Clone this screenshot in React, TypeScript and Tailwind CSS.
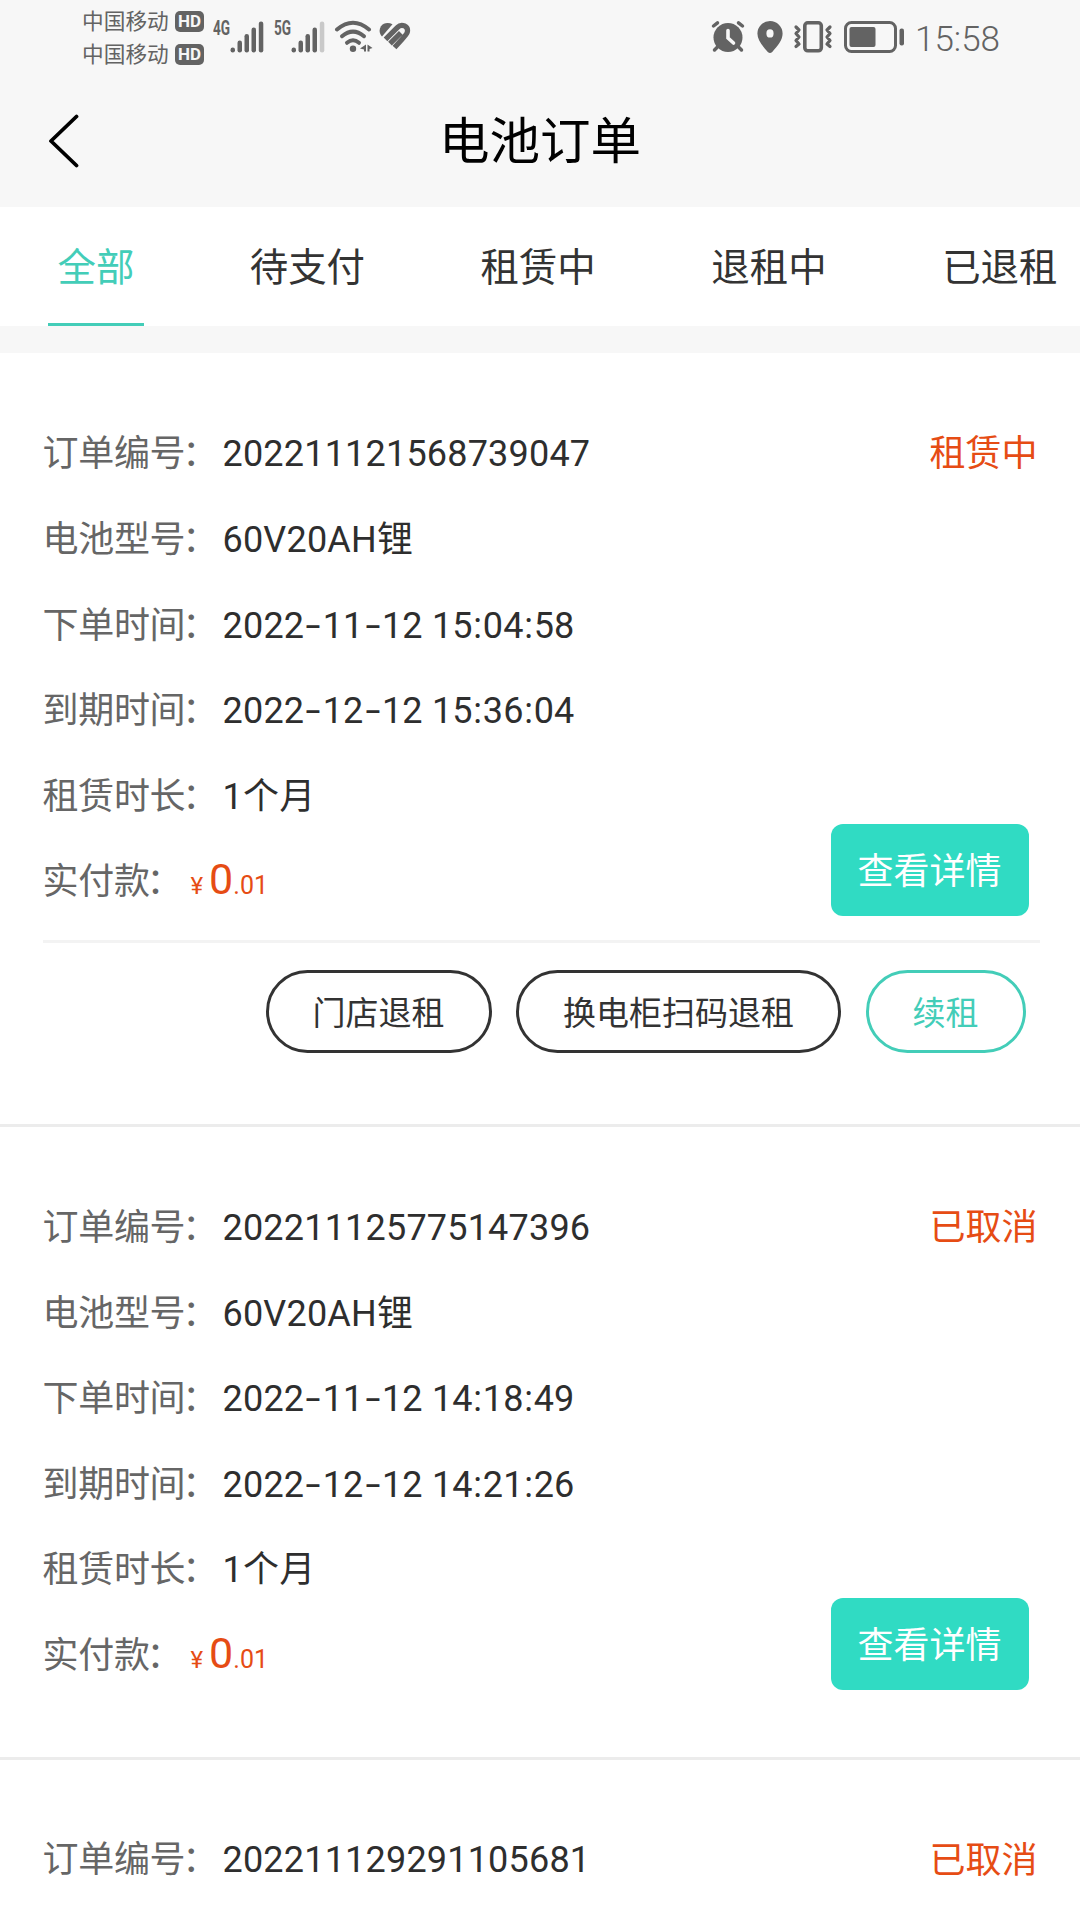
import { useState } from "react";

type Order = {
  id: string;
  status: string;
  active?: boolean;
  detail?: {
    model: string;
    createdAt: string;
    expiresAt: string;
    duration: string;
    price: string;
  };
};

const TABS = ["全部", "待支付", "租赁中", "退租中", "已退租"];

const ORDERS: Order[] = [
  {
    id: "202211121568739047",
    status: "租赁中",
    active: true,
    detail: {
      model: "60V20AH锂",
      createdAt: "2022-11-12 15:04:58",
      expiresAt: "2022-12-12 15:36:04",
      duration: "1个月",
      price: "0.01",
    },
  },
  {
    id: "202211125775147396",
    status: "已取消",
    detail: {
      model: "60V20AH锂",
      createdAt: "2022-11-12 14:18:49",
      expiresAt: "2022-12-12 14:21:26",
      duration: "1个月",
      price: "0.01",
    },
  },
  {
    id: "202211129291105681",
    status: "已取消",
  },
];

function Carrier() {
  return (
    <div className="flex h-[33px] items-center gap-[6px] whitespace-nowrap">
      <span className="w-[87px] text-[21.7px] leading-none">中国移动</span>
      <span className="flex h-[21px] w-[29px] shrink-0 items-center justify-center rounded-[5px] bg-[#636363] text-[17px] leading-none font-bold text-[#f7f7f7]">
        HD
      </span>
    </div>
  );
}

function Signal({ label, weak }: { label: string; weak?: boolean }) {
  return (
    <div className="flex">
      <span className="w-[17px] origin-left scale-x-[0.68] text-[20px] leading-[14px] font-bold">
        {label}
      </span>
      <svg width="34" height="33" viewBox="0 0 34 33" fill="currentColor">
        <rect x="0.5" y="26.5" width="4.5" height="5" rx="2.2" />
        <rect x="7.5" y="19.5" width="4.5" height="12" rx="2.2" />
        <rect x="14.5" y="13" width="4.5" height="18.5" rx="2.2" />
        <rect x="21.5" y="6.5" width="4.5" height="25" rx="2.2" />
        <rect x="28.8" y="0.5" width="4.5" height="31" rx="2.2" fill={weak ? "#c9c9c9" : "currentColor"} />
      </svg>
    </div>
  );
}

function StatusBar() {
  return (
    <div className="flex h-[74px] shrink-0 items-start justify-between pr-[80px] pl-[82px] text-[#636363]">
      <div className="flex">
        <div className="w-[122px] pt-[5px]">
          <Carrier />
          <Carrier />
        </div>
        <div className="flex pt-[21px] pl-[9px]">
          <Signal label="4G" />
          <div className="w-[10px]" />
          <Signal label="5G" weak />
        </div>
        {/* wifi */}
        <svg className="mt-[20px] ml-[9px]" width="40" height="34" viewBox="0 0 40 34" fill="none" stroke="currentColor" strokeWidth="4" strokeLinecap="round">
          <path d="M3 9.5Q19 -4 35 9.5" />
          <path d="M8 16.2Q19 7 30 16.2" />
          <path d="M13 22.8Q19 17.8 25 22.8" />
          <circle cx="19" cy="28.8" r="3.2" fill="currentColor" stroke="none" />
          <path d="M32 24.5V31.5H30V29.5L26 28.5ZM33.5 24.5L38.5 28L35.5 29V31.5H33.5Z" fill="currentColor" stroke="none" />
        </svg>
        {/* health */}
        <svg className="mt-[22px] ml-[5px]" width="32" height="29" viewBox="0 0 32 29" fill="none">
          <path d="M13.5 2.2C9.5 0 4.5 0.5 2 4.2C-0.2 7.6 0.2 11.5 3 14.5Z" fill="currentColor" />
          <path d="M6.5 17.4L18.5 5.4C22.5 1.2 30 4 28.2 10.5C27.8 12.5 26.5 13.7 15.5 25.5M11 21.6L21.8 10.8" stroke="currentColor" strokeWidth="5.2" />
        </svg>
      </div>

      <div className="flex">
        {/* alarm */}
        <svg className="mt-[20px]" width="34" height="33" viewBox="0 0 34 33" fill="none" stroke="currentColor" strokeWidth="3.5" strokeLinecap="round">
          <circle cx="17" cy="17.5" r="14.5" fill="currentColor" stroke="none" />
          <path d="M2.5 6L6.5 2.8M31.5 6L27.5 2.8M6 27.5L3.5 30M28 27.5L30.5 30" />
          <path d="M17 10.5V18L22.5 23" stroke="#f7f7f7" strokeWidth="3.6" />
        </svg>
        {/* location */}
        <svg className="mt-[21px] ml-[12px]" width="26" height="33" viewBox="0 0 26 33">
          <path fillRule="evenodd" fill="currentColor" d="M13 0A12.6 12.6 0 0 0 .4 12.6C.4 19 5 24.5 10.8 31Q13 33 15.2 31C21 24.5 25.6 19 25.6 12.6A12.6 12.6 0 0 0 13 0ZM13 8.2A3.6 4.2 0 1 1 13 16.6A3.6 4.2 0 1 1 13 8.2Z" />
        </svg>
        {/* vibrate */}
        <svg className="mt-[20px] ml-[10px]" width="40" height="34" viewBox="0 0 40 34" fill="none" stroke="currentColor" strokeWidth="3.6" strokeLinejoin="round" strokeLinecap="round">
          <rect x="11.8" y="2.8" width="16.5" height="28" rx="3" />
          <path strokeWidth="3.2" d="M3 7L6 10L3 13.5L6 17L3 20.5L6 24L3 26.5M37 7L34 10L37 13.5L34 17L37 20.5L34 24L37 26.5" />
        </svg>
        {/* battery */}
        <svg className="mt-[20px] ml-[10px]" width="62" height="34" viewBox="0 0 62 34" fill="none">
          <rect x="2.5" y="2.5" width="50" height="29" rx="6" stroke="currentColor" strokeWidth="3" />
          <rect x="6.5" y="7" width="26" height="20" rx="2" fill="currentColor" />
          <rect x="56.5" y="8.5" width="4.5" height="17" rx="2" fill="currentColor" />
        </svg>
        <span className="mt-[22px] ml-[10px] w-[85px] text-[35px] leading-[35px] font-light whitespace-nowrap">
          15:58
        </span>
      </div>
    </div>
  );
}

function DateText({ value }: { value: string }) {
  return (
    <>
      {value.split("").map((ch, i) => {
        if (ch === "-")
          return (
            <span key={i} className="inline-block w-[18.4px] scale-x-150 text-center">
              -
            </span>
          );
        if (ch === ":")
          return (
            <span key={i} className="inline-block w-[10px] text-center">
              :
            </span>
          );
        return <span key={i}>{ch}</span>;
      })}
    </>
  );
}

function Label({ children }: { children: string }) {
  return (
    <span className="tracking-[-0.3px] text-[#666]">
      {children}
      <span className="-ml-[3px]">：</span>
    </span>
  );
}

function Row({ label, children }: { label: string; children: React.ReactNode }) {
  return (
    <div className="flex h-[85.4px] items-center text-[36px] whitespace-pre">
      <div className="w-[180px]">
        <Label>{label}</Label>
      </div>
      <span className="tracking-[0.2px] text-[#2e2e2e]">{children}</span>
    </div>
  );
}

function OrderDetail({ detail }: { detail: NonNullable<Order["detail"]> }) {
  const [yuan, cents] = detail.price.split(".");

  return (
    <>
      <Row label="电池型号">{detail.model}</Row>
      <Row label="下单时间">
        <DateText value={detail.createdAt} />
      </Row>
      <Row label="到期时间">
        <DateText value={detail.expiresAt} />
      </Row>
      <div className="flex h-[172px] justify-between">
        <div>
          <Row label="租赁时长">{detail.duration}</Row>
          <div className="-mt-[2px] flex h-[85.4px] items-baseline text-[36px] leading-[85.4px]">
            <div className="w-[148px]">
              <Label>实付款</Label>
            </div>
            <span className="text-[24px] text-[#e64c14]">¥</span>
            <span className="ml-[6px] text-[43px] text-[#e64c14]">{yuan}</span>
            <span className="text-[25px] text-[#e64c14]">.{cents}</span>
          </div>
        </div>
        <button className="mt-[70px] mr-[9px] h-[92px] w-[198px] rounded-[12px] bg-[#30dbc3] pt-[5px] text-[36px] text-white">
          查看详情
        </button>
      </div>
    </>
  );
}

function OrderCard({ order }: { order: Order }) {
  return (
    <section className="shrink-0 bg-white px-[42.5px] pt-[58px]">
      <div className="flex justify-between">
        <Row label="订单编号">{order.id}</Row>
        <span className="pt-[1px] text-[36px] leading-[85.4px] text-[#e64c14]">{order.status}</span>
      </div>
      {order.detail && <OrderDetail detail={order.detail} />}

      {order.active && (
        <div className="mt-[14px] -mr-[2px] mb-[14px] flex justify-end gap-[24.5px] border-t-[3px] border-[#f3f3f3] pt-[27px] pr-[14px] text-[33px] text-[#333]">
          <button className="h-[83px] rounded-full border-[3px] border-[#333] px-[44px] pt-[5px]">
            门店退租
          </button>
          <button className="h-[83px] rounded-full border-[3px] border-[#333] px-[44px] pt-[5px]">
            换电柜扫码退租
          </button>
          <button className="h-[83px] rounded-full border-[3px] border-[#43cdb8] px-[44px] pt-[5px] text-[#43cdb8]">
            续租
          </button>
        </div>
      )}
    </section>
  );
}

export default function App() {
  const [tab, setTab] = useState(0);

  return (
    <div className="flex h-[1920px] w-[1080px] flex-col overflow-hidden bg-[#f7f7f7] font-[Roboto,'Noto_Sans_CJK_SC',sans-serif]">
      <StatusBar />

      <header className="flex h-[133px] shrink-0 items-center px-[48px]">
        <svg width="32" height="54" viewBox="0 0 32 54" fill="none" stroke="#000" strokeWidth="3.8" strokeLinecap="round" strokeLinejoin="round">
          <path d="M28.5 2.5L3 27L28.5 51.5" />
        </svg>
        <h1 className="flex-1 pt-[3px] pr-[32px] text-center text-[50.5px] leading-none text-black">电池订单</h1>
      </header>

      <nav className="flex h-[119px] shrink-0 bg-white pl-[48px]">
        {TABS.map((name, i) => (
          <button
            key={name}
            onClick={() => setTab(i)}
            className={
              i === tab
                ? "mr-[48px] shrink-0 border-b-[3px] border-[#43cdb8] px-[9.6px] pt-[6px] text-[38.4px] text-[#43cdb8]"
                : "shrink-0 border-b-[3px] border-transparent px-[57.8px] pt-[6px] text-[38.4px] text-[#333] last:pr-0"
            }
          >
            {name}
          </button>
        ))}
      </nav>

      <main className="mt-[27.4px] flex flex-1 flex-col bg-white">
        {ORDERS.map((order, i) => (
          <div key={order.id}>
            {i > 0 && <div className="mt-[57px] h-[3px] bg-[#ececec]" />}
            <OrderCard order={order} />
          </div>
        ))}
      </main>
    </div>
  );
}
